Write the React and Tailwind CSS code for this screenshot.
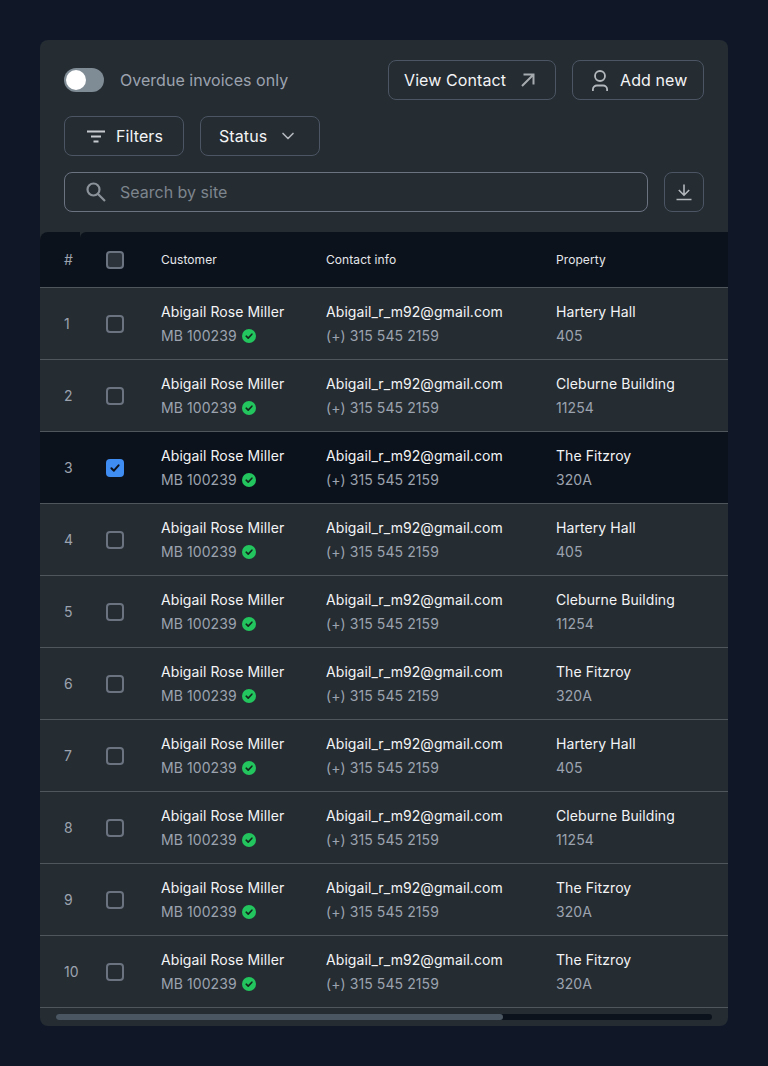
import { ChevronDown } from 'lucide-react'

const properties = [
  ['Hartery Hall', '405'],
  ['Cleburne Building', '11254'],
  ['The Fitzroy', '320A'],
]

const rows = Array.from({ length: 10 }, (_, i) => ({
  id: i + 1,
  // last row repeats The Fitzroy in the design
  property: i === 9 ? properties[2] : properties[i % 3],
  selected: i === 2,
}))

export default function App() {
  return (
    <div className="min-h-[1066px] bg-[#101828] py-10 pl-10 pr-10 font-['Inter',sans-serif]">
      <div className="h-[986px] w-[688px] overflow-hidden rounded-lg bg-[#252c32]">
        {/* Toolbar */}
        <div className="space-y-4 px-6 pt-5">
          <div className="flex items-center justify-between">
            <div className="flex items-center gap-4">
              <div className="flex h-6 w-10 items-center rounded-full bg-[#7f8b95] p-0.5">
                <div className="h-5 w-5 rounded-full bg-white" />
              </div>
              <span className="text-base tracking-[0.02px] text-[#9ca3af]">Overdue invoices only</span>
            </div>
            <div className="flex gap-4">
              <ToolButton className="w-[168px] gap-[15px] pl-[15px]">
                View Contact
                <ArrowIcon />
              </ToolButton>
              <ToolButton className="w-[132px] gap-3 pl-[19px]">
                <PersonIcon />
                Add new
              </ToolButton>
            </div>
          </div>

          <div className="flex gap-4">
            <ToolButton className="w-[120px] gap-[11px] pl-[22px]">
              <FilterIcon />
              Filters
            </ToolButton>
            <ToolButton className="w-[120px] gap-[11px] pl-[18px]">
              Status
              <ChevronDown size={20} strokeWidth={2} className="text-[#b3b8bd]" />
            </ToolButton>
          </div>

          <div className="flex gap-4">
            <div className="flex h-10 flex-1 items-center gap-[14px] rounded-lg border border-[#6b7280] pl-[21px]">
              <SearchIcon />
              <span className="text-base text-[#7d858d]">Search by site</span>
            </div>
            <button className="flex h-10 w-10 items-center justify-center rounded-lg border border-[#4b5563]">
              <DownloadIcon />
            </button>
          </div>
        </div>

        {/* Table */}
        <div className="mt-5">
          <div className="flex h-14 border-b border-[#4f565c] text-xs tracking-[0.08px] text-[#e5e7eb]">
            <div className="flex w-10 items-center overflow-visible rounded-tl-lg bg-[#0c121b] pl-6 text-sm text-[#9ca3af]">#</div>
            <div className="grid flex-1 grid-cols-[26px_55px_165px_230px_1fr] items-center rounded-tl-md bg-[#0c121b]">
              <span />
              <Checkbox header />
              <span>Customer</span>
              <span>Contact info</span>
              <span>Property</span>
            </div>
          </div>
          {rows.map((row) => (
            <Row key={row.id} row={row} />
          ))}
        </div>

        {/* Scrollbar */}
        <div className="mx-4 mt-[6px] h-[6px] rounded-full bg-[#0c121b]">
          <div className="h-full w-[447px] rounded-full bg-[#4a5762]" />
        </div>
      </div>
    </div>
  )
}

function Row({ row }) {
  return (
    <div className={`grid h-[72px] grid-cols-[66px_55px_165px_230px_1fr] items-center border-b border-[#4f565c] text-sm leading-6 tracking-[0.08px] ${row.selected ? 'bg-[#0c121b]' : ''}`}>
      <span className="pl-6 text-[#9ca3af]">{row.id}</span>
      <Checkbox checked={row.selected} />
      <div>
        <p className="text-[#f3f4f6]">Abigail Rose Miller</p>
        <p className="flex items-center gap-[5px] text-[#9ca3af]">
          MB 100239
          <VerifiedIcon />
        </p>
      </div>
      <div>
        <p className="text-[#f3f4f6]">Abigail_r_m92@gmail.com</p>
        <p className="text-[#9ca3af]">(+) 315 545 2159</p>
      </div>
      <div>
        <p className="text-[#f3f4f6]">{row.property[0]}</p>
        <p className="text-[#9ca3af]">{row.property[1]}</p>
      </div>
    </div>
  )
}

function ToolButton({ className, children }) {
  return (
    <button className={`flex h-10 items-center rounded-lg border border-[#4b5563] text-base tracking-[0.1px] text-[#f3f4f6] ${className}`}>
      {children}
    </button>
  )
}

function Checkbox({ checked, header }) {
  if (checked) {
    return (
      <div className="flex h-[18px] w-[18px] items-center justify-center rounded-[4px] bg-[#3f8cf3]">
        <svg width="12" height="12" viewBox="0 0 12 12" fill="none">
          <path d="M2.4 6.2 4.9 8.7l4.7-5.4" stroke="#0c121b" strokeWidth="2" strokeLinecap="round" strokeLinejoin="round" />
        </svg>
      </div>
    )
  }
  return <div className={`h-[18px] w-[18px] rounded-[4px] border-2 border-[#6b7280] ${header ? 'bg-[#2c333a]' : ''}`} />
}

function VerifiedIcon() {
  return (
    <svg width="14" height="14" viewBox="0 0 14 14" fill="none">
      <circle cx="7" cy="7" r="7" fill="#22c55e" />
      <path d="M4.2 7.2 6.2 9.1 9.9 5.2" stroke="#12261c" strokeWidth="1.6" strokeLinecap="round" strokeLinejoin="round" />
    </svg>
  )
}

function ArrowIcon() {
  return (
    <svg width="14" height="14" viewBox="0 0 14 14" fill="none" stroke="#a6abb0" strokeWidth="2">
      <path d="M1 13 12.5 1.5M2.5 1.5h10v10" />
    </svg>
  )
}

function PersonIcon() {
  return (
    <svg width="16" height="21" viewBox="0 0 16 21" fill="none" stroke="#b3b8bd" strokeWidth="1.8">
      <circle cx="8" cy="6" r="5" />
      <path d="M.9 21v-1.5a4 4 0 0 1 4-4h6.2a4 4 0 0 1 4 4V21" />
    </svg>
  )
}

function FilterIcon() {
  return (
    <svg width="18" height="13" viewBox="0 0 18 13" fill="none" stroke="#c7cbcf" strokeWidth="1.8">
      <path d="M0 1.5h18M4 6.5h10M6.5 11.5h5" />
    </svg>
  )
}

function SearchIcon() {
  return (
    <svg width="20" height="20" viewBox="0 0 20 20" fill="none" stroke="#8b9299" strokeWidth="2.2">
      <circle cx="7.5" cy="7.5" r="6" />
      <path d="M12 12l7 7" />
    </svg>
  )
}

function DownloadIcon() {
  return (
    <svg width="18" height="18" viewBox="0 0 18 18" fill="none" stroke="#b3b8bd" strokeWidth="1.6">
      <path d="M9 1.5v10.5M3.8 7 9 12.2 14.2 7M1.5 16.5h15" />
    </svg>
  )
}
